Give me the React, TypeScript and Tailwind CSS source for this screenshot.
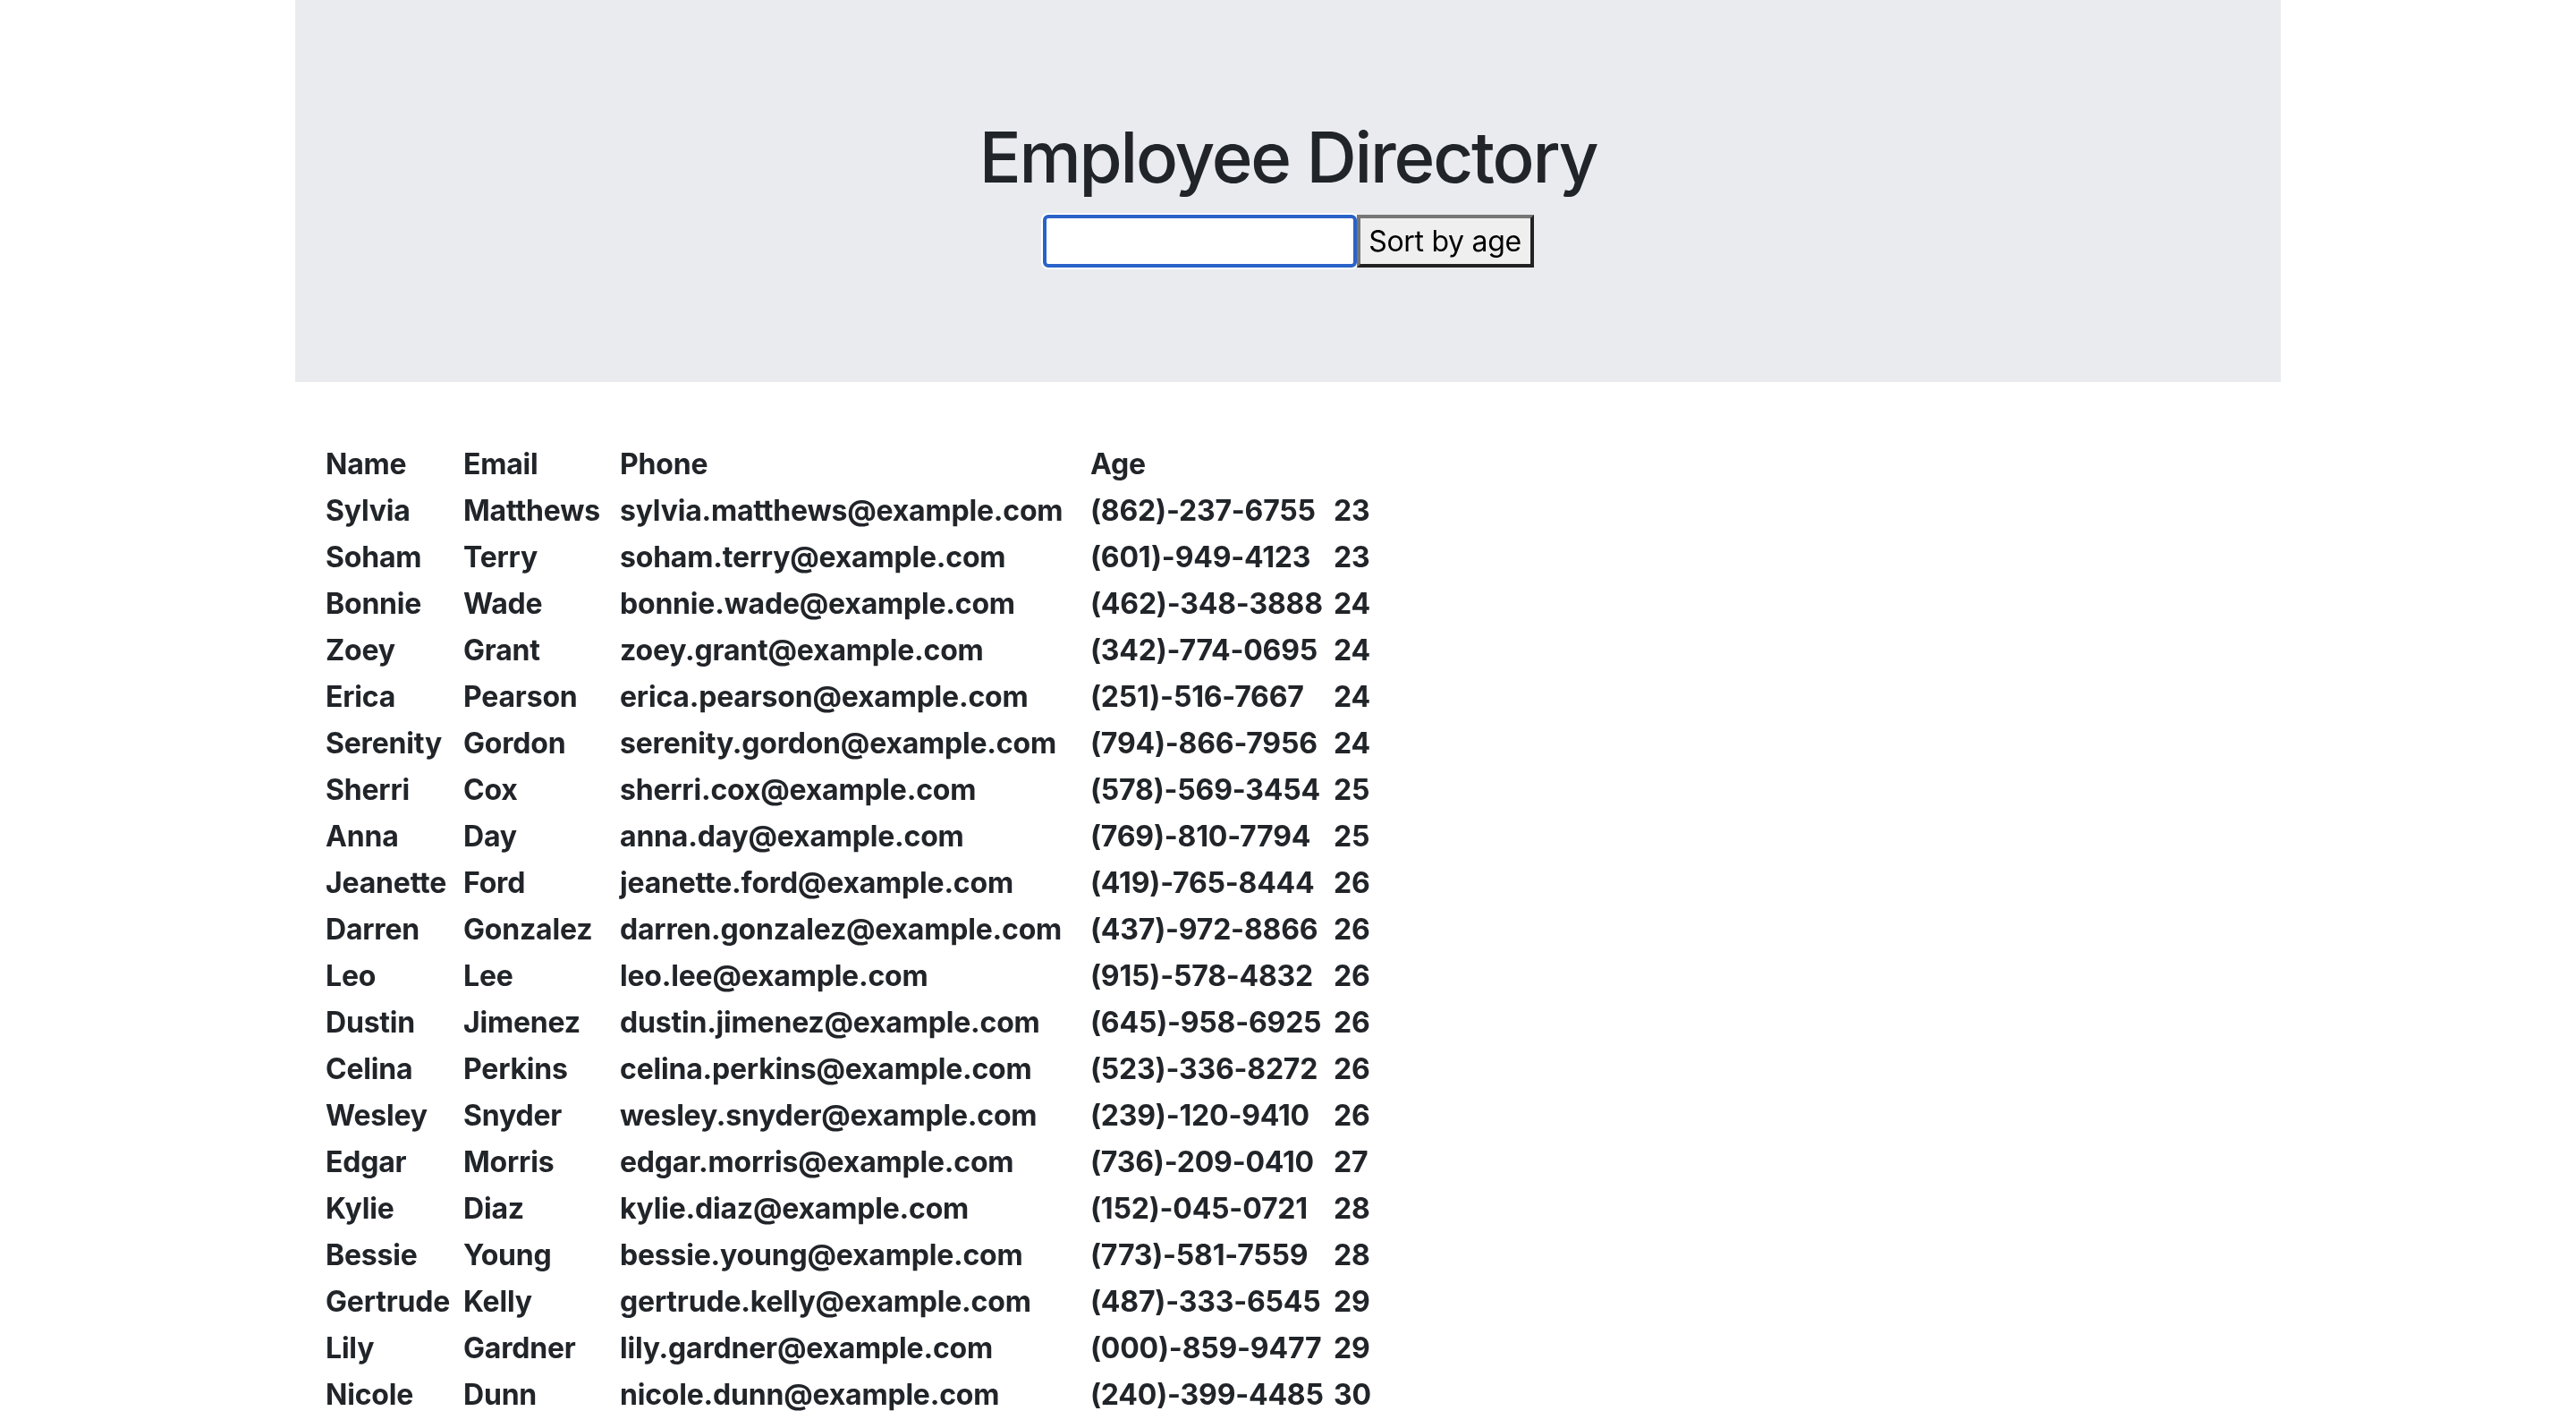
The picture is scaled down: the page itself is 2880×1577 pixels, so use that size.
import React from "react";

type Employee = {
  first: string;
  last: string;
  email: string;
  phone: string;
  age: number;
};

const employees: Employee[] = [
  { first: "Sylvia", last: "Matthews", email: "sylvia.matthews@example.com", phone: "(862)-237-6755", age: 23 },
  { first: "Soham", last: "Terry", email: "soham.terry@example.com", phone: "(601)-949-4123", age: 23 },
  { first: "Bonnie", last: "Wade", email: "bonnie.wade@example.com", phone: "(462)-348-3888", age: 24 },
  { first: "Zoey", last: "Grant", email: "zoey.grant@example.com", phone: "(342)-774-0695", age: 24 },
  { first: "Erica", last: "Pearson", email: "erica.pearson@example.com", phone: "(251)-516-7667", age: 24 },
  { first: "Serenity", last: "Gordon", email: "serenity.gordon@example.com", phone: "(794)-866-7956", age: 24 },
  { first: "Sherri", last: "Cox", email: "sherri.cox@example.com", phone: "(578)-569-3454", age: 25 },
  { first: "Anna", last: "Day", email: "anna.day@example.com", phone: "(769)-810-7794", age: 25 },
  { first: "Jeanette", last: "Ford", email: "jeanette.ford@example.com", phone: "(419)-765-8444", age: 26 },
  { first: "Darren", last: "Gonzalez", email: "darren.gonzalez@example.com", phone: "(437)-972-8866", age: 26 },
  { first: "Leo", last: "Lee", email: "leo.lee@example.com", phone: "(915)-578-4832", age: 26 },
  { first: "Dustin", last: "Jimenez", email: "dustin.jimenez@example.com", phone: "(645)-958-6925", age: 26 },
  { first: "Celina", last: "Perkins", email: "celina.perkins@example.com", phone: "(523)-336-8272", age: 26 },
  { first: "Wesley", last: "Snyder", email: "wesley.snyder@example.com", phone: "(239)-120-9410", age: 26 },
  { first: "Edgar", last: "Morris", email: "edgar.morris@example.com", phone: "(736)-209-0410", age: 27 },
  { first: "Kylie", last: "Diaz", email: "kylie.diaz@example.com", phone: "(152)-045-0721", age: 28 },
  { first: "Bessie", last: "Young", email: "bessie.young@example.com", phone: "(773)-581-7559", age: 28 },
  { first: "Gertrude", last: "Kelly", email: "gertrude.kelly@example.com", phone: "(487)-333-6545", age: 29 },
  { first: "Lily", last: "Gardner", email: "lily.gardner@example.com", phone: "(000)-859-9477", age: 29 },
  { first: "Nicole", last: "Dunn", email: "nicole.dunn@example.com", phone: "(240)-399-4485", age: 30 },
];

function Header() {
  return (
    <div className="bg-[#e9ebef] pt-[128px] pb-[128px] text-center">
      <h1 className="mb-[16px] text-[78px] leading-[96px] font-medium tracking-[-2.2px] text-[#212529]">
        Employee Directory
      </h1>
      <div className="flex justify-center">
        <input
          autoFocus
          type="text"
          className="h-[59px] w-[351px] rounded-[6px] border-[4px] border-[#2a63c8] bg-white px-[4px] text-[32px] outline-none ring-[2px] ring-white"
        />
        <button
          type="button"
          className="h-[59px] w-[198px] border-[4px] border-t-[#767676] border-l-[#767676] border-r-[#222222] border-b-[#222222] bg-[#efefef] text-[32px] leading-none tracking-[-0.3px] text-black"
        >
          Sort by age
        </button>
      </div>
    </div>
  );
}

const c1 = "w-[154px] whitespace-nowrap px-[2px] py-[2px]";
const c2 = "w-[175px] whitespace-nowrap px-[2px] py-[2px]";
const c3 = "w-[526px] whitespace-nowrap px-[2px] py-[2px]";
const c4 = "w-[272px] whitespace-nowrap px-[2px] py-[2px]";
const c5 = "whitespace-nowrap px-[2px] py-[2px]";

export default function App() {
  return (
    <div className="min-h-screen bg-white font-['Inter','Noto_Sans',sans-serif] text-[#212529]">
      <div className="mx-auto w-[2220px]">
        <Header />
        <div className="mt-[66px] px-[32px]">
          <table className="border-separate border-spacing-0 text-left text-[32px] leading-[48px] font-bold tracking-[-0.2px]">
            <thead>
              <tr>
                <th className={c1}>Name</th>
                <th className={c2}>Email</th>
                <th className={c3}>Phone</th>
                <th className={c4}>Age</th>
              </tr>
            </thead>
            <tbody>
              {employees.map((e) => (
                <tr key={e.email}>
                  <td className={c1}>{e.first}</td>
                  <td className={c2}>{e.last}</td>
                  <td className={c3}>{e.email}</td>
                  <td className={c4}>{e.phone}</td>
                  <td className={c5}>{e.age}</td>
                </tr>
              ))}
            </tbody>
          </table>
        </div>
      </div>
    </div>
  );
}
